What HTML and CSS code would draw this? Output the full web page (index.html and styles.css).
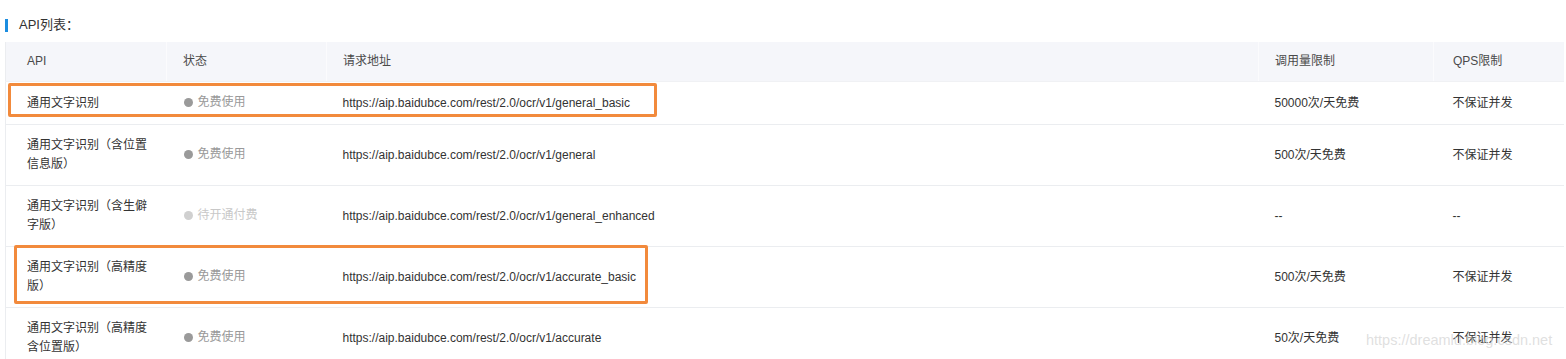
FILE: index.html
```html
<!DOCTYPE html>
<html lang="zh-CN">
<head>
<meta charset="utf-8">
<title>API列表</title>
<link rel="stylesheet" href="styles.css">
</head>
<body>
<div class="page">
  <h2 class="title"><span class="bar"></span>API列表：</h2>
  <div class="table-wrap">
    <table class="api-table">
      <colgroup>
        <col class="c1"><col class="c2"><col class="c3"><col class="c4"><col class="c5">
      </colgroup>
      <thead>
        <tr>
          <th class="first">API</th>
          <th>状态</th>
          <th>请求地址</th>
          <th>调用量限制</th>
          <th class="qps">QPS限制</th>
        </tr>
      </thead>
      <tbody>
        <tr>
          <td class="first">通用文字识别</td>
          <td><span class="status"><span class="dot"></span>免费使用</span></td>
          <td>https://aip.baidubce.com/rest/2.0/ocr/v1/general_basic</td>
          <td>50000次/天免费</td>
          <td class="qps">不保证并发</td>
        </tr>
        <tr>
          <td class="first">通用文字识别（含位置<br>信息版）</td>
          <td><span class="status"><span class="dot"></span>免费使用</span></td>
          <td>https://aip.baidubce.com/rest/2.0/ocr/v1/general</td>
          <td>500次/天免费</td>
          <td class="qps">不保证并发</td>
        </tr>
        <tr>
          <td class="first">通用文字识别（含生僻<br>字版）</td>
          <td><span class="status pending"><span class="dot"></span>待开通付费</span></td>
          <td>https://aip.baidubce.com/rest/2.0/ocr/v1/general_enhanced</td>
          <td>--</td>
          <td class="qps">--</td>
        </tr>
        <tr>
          <td class="first">通用文字识别（高精度<br>版）</td>
          <td><span class="status"><span class="dot"></span>免费使用</span></td>
          <td>https://aip.baidubce.com/rest/2.0/ocr/v1/accurate_basic</td>
          <td>500次/天免费</td>
          <td class="qps">不保证并发</td>
        </tr>
        <tr>
          <td class="first">通用文字识别（高精度<br>含位置版）</td>
          <td><span class="status"><span class="dot"></span>免费使用</span></td>
          <td>https://aip.baidubce.com/rest/2.0/ocr/v1/accurate</td>
          <td>50次/天免费</td>
          <td class="qps">不保证并发</td>
        </tr>
      </tbody>
    </table>
  </div>
  <div class="mark mark-1"></div>
  <div class="mark mark-2"></div>
  <div class="watermark">https://dreamlu.blog.csdn.net</div>
</div>
</body>
</html>
```
FILE: styles.css
```css
html, body {
  margin: 0;
  padding: 0;
  background: #fff;
  overflow: hidden;
}
body {
  font-family: "Liberation Sans", Arial, "Noto Sans CJK SC", sans-serif;
  color: #333;
  font-size: 12px;
}
.page {
  position: relative;
  padding: 17px 3px 0 5px;
  height: 359px;
  box-sizing: border-box;
}
.title {
  margin: 0;
  display: flex;
  align-items: center;
  gap: 11px;
  font-size: 13px;
  font-weight: normal;
  color: #333;
  line-height: 16px;
  height: 16px;
}
.bar {
  display: block;
  width: 3px;
  height: 13px;
  background: #1b8de0;
}
.table-wrap {
  margin-top: 9px;
}
.api-table {
  width: 1558px;
  border-collapse: collapse;
  table-layout: fixed;
  border-left: 1px solid #ebedf0;
}
.c1 { width: 161px; }
.c2 { width: 160px; }
.c3 { width: 932px; }
.c4 { width: 175px; }
.c5 { width: 130px; }
.api-table th {
  background: #f5f6fa;
  color: #4a4a4a;
  font-weight: normal;
  text-align: left;
  line-height: 19px;
  padding: 10px 16px 10px 16px;
  border-right: 1px solid #fbfbfd;
  border-bottom: 1px solid #f0f1f4;
}
.api-table th:last-child { border-right: none; }
.api-table td {
  line-height: 19px;
  padding: 11px 16px 11px 16px;
  border-bottom: 1px solid #ebedf0;
  vertical-align: middle;
  white-space: nowrap;
}
.api-table .first { padding-left: 21px; }
.api-table .qps { padding-left: 19px; }
.status {
  display: inline-flex;
  align-items: center;
  gap: 5px;
  color: #999;
  margin-left: 1px;
}
.dot {
  width: 9px;
  height: 9px;
  border-radius: 50%;
  background: #9a9a9a;
}
.status.pending { color: #c8c8c8; }
.status.pending .dot { background: #d0d0d0; }
.mark {
  position: absolute;
  border: 3px solid #f28a3c;
  border-radius: 2px;
  box-sizing: border-box;
}
.mark-1 {
  left: 8px;
  top: 83px;
  width: 649px;
  height: 34px;
}
.mark-2 {
  left: 14px;
  top: 245px;
  width: 634px;
  height: 59px;
}
.watermark {
  position: absolute;
  left: 1366px;
  top: 332px;
  font-size: 14.5px;
  line-height: 17px;
  color: rgba(210, 210, 210, 0.7);
  white-space: nowrap;
}
```
